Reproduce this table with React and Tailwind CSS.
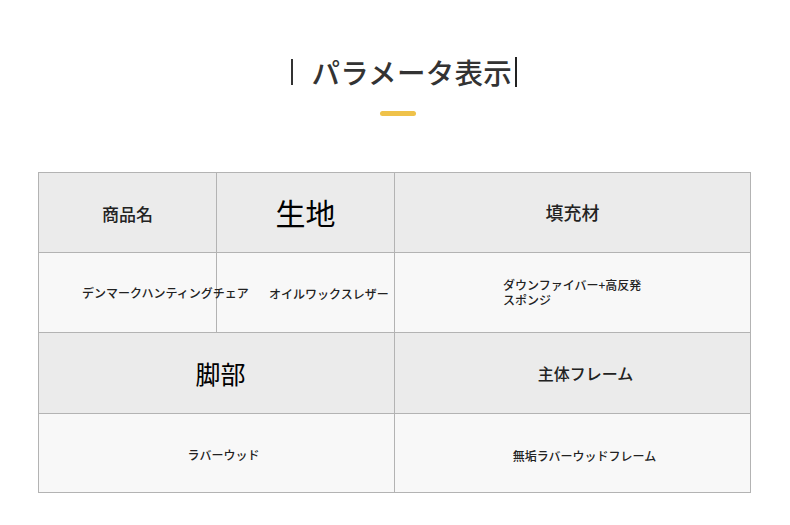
const FONT = { fontFamily: '"Noto Sans CJK JP", "Noto Sans", sans-serif' }

export default function App() {
  return (
    <div className="w-[790px] h-[525px] bg-white text-[#222]" style={FONT}>
      <div className="flex flex-col items-center pt-[52px]">
        <h1 className="flex items-center ml-[18px] text-[28.5px] leading-[40px] text-[#333] font-medium">
          <span className="w-[2px] h-[26px] bg-[#333] mr-[18px]" />
          <span className="tracking-[0.3px]">パラメータ表示</span>
          <span className="w-[1.5px] h-[30px] bg-[#222] ml-[3px]" />
        </h1>
        <div className="mt-[19px] ml-[6px] w-[36px] h-[5px] rounded-full bg-[#efc24a]" />
      </div>

      <div className="ml-[38px] mt-[56px] w-[713px] border border-[#b3b3b3] flex flex-col font-medium">
        <div className="flex h-[80px] bg-[#ebebeb] border-b border-[#b3b3b3]">
          <div className="w-[178px] flex items-center justify-center pt-[2px] text-[17px] border-r border-[#b3b3b3]">商品名</div>
          <div className="w-[178px] flex items-center justify-center text-[30px] font-normal text-black border-r border-[#b3b3b3]">生地</div>
          <div className="flex-1 flex items-center justify-center text-[18px]">填充材</div>
        </div>
        <div className="flex h-[80px] bg-[#f8f8f8] border-b border-[#b3b3b3] text-[12px]">
          <div className="w-[178px] flex items-center pl-[43px] whitespace-nowrap overflow-visible border-r border-[#b3b3b3] relative z-10">
            デンマークハンティングチェア
          </div>
          <div className="w-[178px] flex items-center pl-[52px] pt-[3px] whitespace-nowrap border-r border-[#b3b3b3]">
            オイルワックスレザー
          </div>
          <div className="flex-1 flex items-center pl-[108px] leading-[14.5px]">
            <div>ダウンファイバー+高反発<br />スポンジ</div>
          </div>
        </div>
        <div className="flex h-[81px] bg-[#ebebeb] border-b border-[#b3b3b3]">
          <div className="w-[356px] flex items-center justify-center pl-[8px] pt-[2px] text-[25px] font-normal text-black border-r border-[#b3b3b3]">脚部</div>
          <div className="flex-1 flex items-center justify-center pl-[26px] text-[16px]">主体フレーム</div>
        </div>
        <div className="flex h-[78px] bg-[#f8f8f8] text-[12px]">
          <div className="w-[356px] flex items-center justify-center pl-[14px] pt-[4px] border-r border-[#b3b3b3]">ラバーウッド</div>
          <div className="flex-1 flex items-center justify-center pl-[24px] pt-[6px]">無垢ラバーウッドフレーム</div>
        </div>
      </div>
    </div>
  )
}
